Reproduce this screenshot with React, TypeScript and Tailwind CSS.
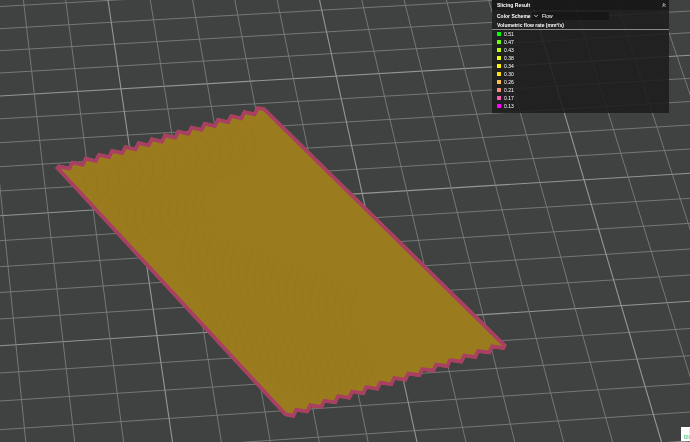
import { ChevronDown, ChevronsUp } from "lucide-react";

type Point = [number, number];

const legend = [
  { value: "0.51", color: "#00ff00" },
  { value: "0.47", color: "#70ff00" },
  { value: "0.43", color: "#b8fc00" },
  { value: "0.38", color: "#eeff00" },
  { value: "0.34", color: "#fff200" },
  { value: "0.30", color: "#ffe010" },
  { value: "0.26", color: "#ffc04a" },
  { value: "0.21", color: "#fb8f7c" },
  { value: "0.17", color: "#fb5bb4" },
  { value: "0.13", color: "#ff00ff" },
];

// Left and right heights of the bed's cross lines; every fifth is a major line.
const crossLines: Point[] = [
  [-14.5, -53], [6.5, -32], [28.7, -11], [50.7, 11], [73, 32.7],
  [96, 55.3], [118.8, 78.3], [142.7, 101.5], [166.7, 125], [191, 149],
  [215.7, 173.3], [240.7, 198.3], [266.7, 223.3], [292.5, 249], [319, 275],
  [345.7, 301.3], [373, 328.5], [401, 355.7], [429.7, 383.7], [458.7, 412], [488, 441],
];

const columns = Array.from({ length: 19 }, (_, i) => i - 4);

function modelOutline(): string {
  const points: Point[] = [[55, 168], [58.3, 164.3]];
  for (let i = 1; i <= 15; i++) {
    const x = 58.3 + i * 13.23;
    const y = 164.3 - i * 3.88;
    points.push([x - 3.2, y + 6.2], [x, y]);
  }
  points.push([265, 107.4], [506.8, 345]);
  for (let i = 15; i >= 0; i--) {
    const x = 294.3 + i * 14;
    const y = 417.9 - i * 4.52;
    if (i < 15) points.push([x + 3, y - 6.2]);
    points.push([x, y]);
  }
  points.push([284.5, 416]);
  return points.map(([x, y]) => `${x.toFixed(1)},${y.toFixed(1)}`).join(" ");
}

const outline = modelOutline();

function BuildPlate() {
  return (
    <svg
      className="absolute inset-0 h-full w-full"
      viewBox="0 0 690 442"
      preserveAspectRatio="xMinYMin slice"
      role="img"
      aria-label="Sliced model on the build plate"
    >
      <defs>
        <clipPath id="model">
          <polygon points={outline} />
        </clipPath>
      </defs>
      <g>
        {crossLines.map(([left, right], i) => (
          <line
            key={i}
            x1="0"
            y1={left}
            x2="690"
            y2={right}
            stroke={i % 5 === 0 ? "#949695" : "#787a79"}
            strokeWidth={i % 5 === 0 ? 1.1 : 0.95}
          />
        ))}
        {columns.map((k) => (
          <line
            key={k}
            x1={108 + 42.3 * k}
            y1="0"
            x2={172.5 + 48.9 * k}
            y2="442"
            stroke={k % 5 === 0 ? "#949695" : "#787a79"}
            strokeWidth={k % 5 === 0 ? 1.1 : 0.95}
          />
        ))}
      </g>
      <g clipPath="url(#model)">
        <polygon points={outline} fill="#9a7b1e" />
        <g fill="none" stroke="#8b7020" strokeWidth="0.5" opacity="0.25">
          {Array.from({ length: 16 }, (_, i) => (
            <path
              key={i}
              d={`M${75 + i * 11} ${168 - i * 3.3} q${20 + i} ${14 + i} ${4 - i} ${40 + i} t${15 - i * 2} 50`}
            />
          ))}
          {Array.from({ length: 22 }, (_, i) => (
            <path
              key={i}
              d={`M${190 + i * 8} ${225 + i * 3} q-18 32 3 62 t22 76`}
              opacity="0.6"
            />
          ))}
        </g>
        <polygon points={outline} fill="none" stroke="#a93f62" strokeWidth="7.4" />
      </g>
    </svg>
  );
}

export default function App() {
  return (
    <main className="relative flex min-h-screen items-start justify-end overflow-hidden bg-[#404241] pr-[21px] font-['Liberation_Sans',sans-serif] text-[5px] leading-[8px] text-white">
      <BuildPlate />
      <section className="relative w-[177px] bg-[#1c1c1c]/88 pb-[3px]">
        <header className="flex h-[10px] items-center justify-between bg-[#141414]/60 pr-[2px] pl-[5px]">
          <h1 className="font-bold">Slicing Result</h1>
          <button type="button" aria-label="Collapse">
            <ChevronsUp className="size-[6px]" strokeWidth={3} />
          </button>
        </header>
        <div className="flex h-[11px] items-center pl-[5px]">
          <label htmlFor="scheme" className="w-[35px] font-bold">
            Color Scheme
          </label>
          <div className="grid w-[77px] items-center bg-[#151515]/80">
            <select
              id="scheme"
              className="col-start-1 row-start-1 h-2 w-full appearance-none bg-transparent pl-[10px]"
            >
              <option>Flow</option>
            </select>
            <ChevronDown className="pointer-events-none col-start-1 row-start-1 ml-px size-[6px]" strokeWidth={3} />
          </div>
        </div>
        <h2 className="border-b border-[#8a8a8a] pl-[5px] font-bold">Volumetric flow rate (mm³/s)</h2>
        <ul>
          {legend.map((item) => (
            <li key={item.value} className="flex items-center gap-[3px] pl-[5px]">
              <span className="size-1" style={{ backgroundColor: item.color }} />
              {item.value}
            </li>
          ))}
        </ul>
      </section>
      <div className="absolute right-0 bottom-px h-[14px] w-[9px] bg-white">
        <svg className="h-full w-full" viewBox="0 0 9 14" fill="none" stroke="#7fd0a0" aria-hidden="true">
          <path d="M8 2.5h1M8 5h1" strokeWidth="0.8" />
          <rect x="3.5" y="8.5" width="1.8" height="3" strokeWidth="0.9" />
          <path d="M6.8 8v4M8.4 8v4" strokeWidth="0.9" />
        </svg>
      </div>
    </main>
  );
}
